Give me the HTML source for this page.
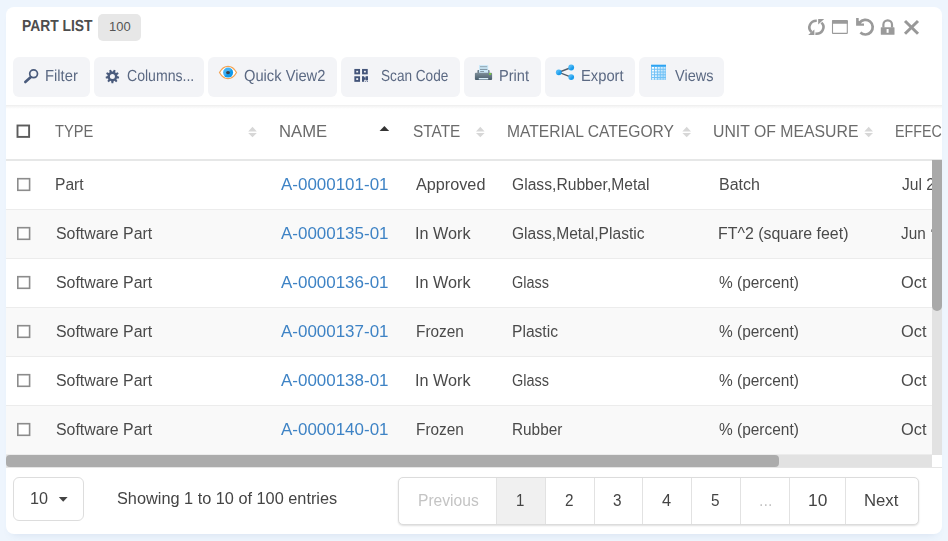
<!DOCTYPE html>
<html>
<head>
<meta charset="utf-8">
<title>Part List</title>
<style>
html,body{margin:0;padding:0;}
body{width:948px;height:541px;overflow:hidden;background:#eef5fd;font-family:"Liberation Sans",sans-serif;position:relative;}
.a{position:absolute;}
.card{left:6px;top:7px;width:936px;height:527px;background:#fff;border-radius:8px;box-shadow:0 6px 8px -6px rgba(80,110,160,0.17);overflow:hidden;}
/* inside card coordinates are page coords minus (6,7); use #pg wrapper shifted back */
#pg{position:absolute;left:-6px;top:-7px;width:948px;height:541px;}
.t{position:absolute;white-space:pre;line-height:20px;height:20px;transform-origin:0 15px;display:block;}
.badge{left:98px;top:14px;width:43px;height:27px;border-radius:5px;background:#e7e7e7;}
.btn{top:57px;height:40px;border-radius:6px;background:#f3f4f7;}
.shadowline{left:6px;top:105px;width:936px;height:4px;background:linear-gradient(to bottom,rgba(0,0,0,0.07) 0%,rgba(0,0,0,0.035) 40%,rgba(0,0,0,0) 100%);}
.hline{left:6px;top:159px;width:936px;height:2px;background:#e6e7e7;}
.row{left:6px;width:926px;height:48px;}
.row.even{background:#f9f9f9;}
.rline{left:6px;width:926px;height:1px;background:#ececec;}
.cb{left:17px;width:10px;height:10px;border:1.5px solid #8c8c8c;background:#fff;border-radius:1px;}
.cbh{left:17px;top:125px;width:9px;height:9px;border:2px solid #555;background:#fff;border-radius:1px;}
.vtrack{left:932px;top:161px;width:10px;height:294px;background:#e2e2e2;}
.vthumb{left:932px;top:160px;width:10px;height:151px;background:#a9a9a9;border-radius:0 0 5px 5px;}
.htrack{left:6px;top:455px;width:926px;height:12px;background:#e2e2e2;}
.hthumb{left:6px;top:455px;width:773px;height:12px;background:#acacac;border-radius:4px;}
.fline{left:6px;top:467px;width:936px;height:1px;background:#e6e6e6;}
.sel{left:13px;top:477px;width:69px;height:42px;border:1px solid #ddd;border-radius:6px;background:#fff;}
.pag{left:398px;top:477px;width:519px;height:46px;border:1px solid #dcdcdc;border-radius:5px;background:#fff;box-shadow:0 1px 2px rgba(0,0,0,0.13);overflow:hidden;}
.pdiv{top:478px;width:1px;height:46px;background:#e2e2e2;}
.pact{left:497px;top:478px;width:49px;height:46px;background:#f0f0f0;}
svg{position:absolute;overflow:visible;}
</style>
</head>
<body>
<div class="a card"><div id="pg">

<!-- title -->
<div class="a badge"></div>

<!-- toolbar buttons -->
<div class="a btn" style="left:13px;width:77px"></div>
<div class="a btn" style="left:94px;width:110px"></div>
<div class="a btn" style="left:208px;width:129px"></div>
<div class="a btn" style="left:341px;width:119px"></div>
<div class="a btn" style="left:464px;width:77px"></div>
<div class="a btn" style="left:545px;width:90px"></div>
<div class="a btn" style="left:639px;width:85px"></div>
<div class="a shadowline"></div>

<!-- rows -->
<div class="a row" style="top:161px"></div>
<div class="a row even" style="top:210px"></div>
<div class="a row" style="top:259px"></div>
<div class="a row even" style="top:308px"></div>
<div class="a row" style="top:357px"></div>
<div class="a row even" style="top:406px"></div>
<div class="a rline" style="top:209px"></div>
<div class="a rline" style="top:258px"></div>
<div class="a rline" style="top:307px"></div>
<div class="a rline" style="top:356px"></div>
<div class="a rline" style="top:405px"></div>
<div class="a rline" style="top:454px"></div>
<div class="a hline"></div>

<!-- checkboxes -->
<!--CBS-->

<!-- footer -->
<div class="a fline"></div>
<div class="a sel"></div>
<div class="a pag"></div>
<div class="a pact"></div>
<div class="a pdiv" style="left:496px"></div>
<div class="a pdiv" style="left:545px"></div>
<div class="a pdiv" style="left:594px"></div>
<div class="a pdiv" style="left:642px"></div>
<div class="a pdiv" style="left:691px"></div>
<div class="a pdiv" style="left:740px"></div>
<div class="a pdiv" style="left:789px"></div>
<div class="a pdiv" style="left:845px"></div>

<span class="t" style="left:21.53px;top:17px;font-size:16px;font-weight:700;color:#4d4d4d;text-rendering:geometricPrecision;transform:scaleX(0.8661)">PART LIST</span>
<span class="t" style="left:109.40px;top:17px;font-size:13px;font-weight:400;color:#555;transform:scaleX(0.9972)">100</span>
<div class="a" style="left:0;top:0;width:948px;height:541px;will-change:transform">
<span class="t" style="left:45.38px;top:67px;font-size:16px;font-weight:400;color:#5b6983;text-rendering:geometricPrecision;transform:scaleX(0.9226)">Filter</span>
<span class="t" style="left:126.80px;top:67px;font-size:16px;font-weight:400;color:#5b6983;text-rendering:geometricPrecision;transform:scaleX(0.8797)">Columns...</span>
<span class="t" style="left:244.20px;top:67px;font-size:16px;font-weight:400;color:#5b6983;text-rendering:geometricPrecision;transform:scaleX(0.9185)">Quick View2</span>
<span class="t" style="left:381.10px;top:67px;font-size:16px;font-weight:400;color:#5b6983;text-rendering:geometricPrecision;transform:scaleX(0.8503)">Scan Code</span>
<span class="t" style="left:499.29px;top:67px;font-size:16px;font-weight:400;color:#5b6983;text-rendering:geometricPrecision;transform:scaleX(0.9121)">Print</span>
<span class="t" style="left:580.58px;top:67px;font-size:16px;font-weight:400;color:#5b6983;text-rendering:geometricPrecision;transform:scaleX(0.9215)">Export</span>
<span class="t" style="left:674.60px;top:67px;font-size:16px;font-weight:400;color:#5b6983;text-rendering:geometricPrecision;transform:scaleX(0.9082)">Views</span>
<span class="t" style="left:54.80px;top:122px;font-size:16px;font-weight:400;color:#6b6b6b;transform:scaleX(0.9169)">TYPE</span>
<span class="t" style="left:279.16px;top:122px;font-size:16px;font-weight:400;color:#6b6b6b;transform:scaleX(1.0414)">NAME</span>
<span class="t" style="left:412.50px;top:122px;font-size:16px;font-weight:400;color:#6b6b6b;transform:scaleX(0.9626)">STATE</span>
<span class="t" style="left:507.32px;top:122px;font-size:16px;font-weight:400;color:#6b6b6b;transform:scaleX(0.9765)">MATERIAL CATEGORY</span>
<span class="t" style="left:712.61px;top:122px;font-size:16px;font-weight:400;color:#6b6b6b;transform:scaleX(0.9877)">UNIT OF MEASURE</span>
<span class="t" style="left:895.31px;top:122px;font-size:16px;font-weight:400;color:#6b6b6b;transform:scaleX(0.8921)">EFFECTIVE DATE</span>
<span class="t" style="left:55.12px;top:175px;font-size:16px;font-weight:400;color:#4a4a4a;transform:scaleX(0.9758)">Part</span>
<span class="t" style="left:281.40px;top:175px;font-size:16px;font-weight:400;color:#3e83c5;transform:scaleX(1.0599)">A-0000101-01</span>
<span class="t" style="left:416.00px;top:175px;font-size:16px;font-weight:400;color:#4a4a4a;transform:scaleX(1.0134)">Approved</span>
<span class="t" style="left:511.50px;top:175px;font-size:16px;font-weight:400;color:#4a4a4a;transform:scaleX(0.9789)">Glass,Rubber,Metal</span>
<span class="t" style="left:718.60px;top:175px;font-size:16px;font-weight:400;color:#4a4a4a;transform:scaleX(0.9996)">Batch</span>
<span class="t" style="left:901.50px;top:175px;font-size:16px;font-weight:400;color:#4a4a4a;transform:scaleX(0.9764)">Jul 2</span>
<span class="t" style="left:55.60px;top:224px;font-size:16px;font-weight:400;color:#4a4a4a;transform:scaleX(0.9930)">Software Part</span>
<span class="t" style="left:281.40px;top:224px;font-size:16px;font-weight:400;color:#3e83c5;transform:scaleX(1.0599)">A-0000135-01</span>
<span class="t" style="left:415.49px;top:224px;font-size:16px;font-weight:400;color:#4a4a4a;transform:scaleX(1.0123)">In Work</span>
<span class="t" style="left:511.50px;top:224px;font-size:16px;font-weight:400;color:#4a4a4a;transform:scaleX(0.9740)">Glass,Metal,Plastic</span>
<span class="t" style="left:718.01px;top:224px;font-size:16px;font-weight:400;color:#4a4a4a;transform:scaleX(0.9948)">FT^2 (square feet)</span>
<span class="t" style="left:901.30px;top:224px;font-size:16px;font-weight:400;color:#4a4a4a;transform:scaleX(0.9559)">Jun</span>
<span class="t" style="left:55.60px;top:273px;font-size:16px;font-weight:400;color:#4a4a4a;transform:scaleX(0.9930)">Software Part</span>
<span class="t" style="left:281.40px;top:273px;font-size:16px;font-weight:400;color:#3e83c5;transform:scaleX(1.0599)">A-0000136-01</span>
<span class="t" style="left:415.49px;top:273px;font-size:16px;font-weight:400;color:#4a4a4a;transform:scaleX(1.0123)">In Work</span>
<span class="t" style="left:511.50px;top:273px;font-size:16px;font-weight:400;color:#4a4a4a;transform:scaleX(0.9047)">Glass</span>
<span class="t" style="left:719.00px;top:273px;font-size:16px;font-weight:400;color:#4a4a4a;transform:scaleX(0.9652)">% (percent)</span>
<span class="t" style="left:901.40px;top:273px;font-size:16px;font-weight:400;color:#4a4a4a;transform:scaleX(1.0218)">Oct</span>
<span class="t" style="left:55.60px;top:322px;font-size:16px;font-weight:400;color:#4a4a4a;transform:scaleX(0.9930)">Software Part</span>
<span class="t" style="left:281.40px;top:322px;font-size:16px;font-weight:400;color:#3e83c5;transform:scaleX(1.0599)">A-0000137-01</span>
<span class="t" style="left:415.54px;top:322px;font-size:16px;font-weight:400;color:#4a4a4a;transform:scaleX(0.9604)">Frozen</span>
<span class="t" style="left:511.52px;top:322px;font-size:16px;font-weight:400;color:#4a4a4a;transform:scaleX(0.9756)">Plastic</span>
<span class="t" style="left:719.00px;top:322px;font-size:16px;font-weight:400;color:#4a4a4a;transform:scaleX(0.9652)">% (percent)</span>
<span class="t" style="left:901.40px;top:322px;font-size:16px;font-weight:400;color:#4a4a4a;transform:scaleX(1.0218)">Oct</span>
<span class="t" style="left:55.60px;top:371px;font-size:16px;font-weight:400;color:#4a4a4a;transform:scaleX(0.9930)">Software Part</span>
<span class="t" style="left:281.40px;top:371px;font-size:16px;font-weight:400;color:#3e83c5;transform:scaleX(1.0599)">A-0000138-01</span>
<span class="t" style="left:415.49px;top:371px;font-size:16px;font-weight:400;color:#4a4a4a;transform:scaleX(1.0123)">In Work</span>
<span class="t" style="left:511.50px;top:371px;font-size:16px;font-weight:400;color:#4a4a4a;transform:scaleX(0.9047)">Glass</span>
<span class="t" style="left:719.00px;top:371px;font-size:16px;font-weight:400;color:#4a4a4a;transform:scaleX(0.9652)">% (percent)</span>
<span class="t" style="left:901.40px;top:371px;font-size:16px;font-weight:400;color:#4a4a4a;transform:scaleX(1.0218)">Oct</span>
<span class="t" style="left:55.60px;top:420px;font-size:16px;font-weight:400;color:#4a4a4a;transform:scaleX(0.9930)">Software Part</span>
<span class="t" style="left:281.40px;top:420px;font-size:16px;font-weight:400;color:#3e83c5;transform:scaleX(1.0599)">A-0000140-01</span>
<span class="t" style="left:415.54px;top:420px;font-size:16px;font-weight:400;color:#4a4a4a;transform:scaleX(0.9604)">Frozen</span>
<span class="t" style="left:511.54px;top:420px;font-size:16px;font-weight:400;color:#4a4a4a;transform:scaleX(0.9588)">Rubber</span>
<span class="t" style="left:719.00px;top:420px;font-size:16px;font-weight:400;color:#4a4a4a;transform:scaleX(0.9652)">% (percent)</span>
<span class="t" style="left:901.40px;top:420px;font-size:16px;font-weight:400;color:#4a4a4a;transform:scaleX(1.0218)">Oct</span>
<span class="t" style="left:30.39px;top:489px;font-size:16px;font-weight:400;color:#444;transform:scaleX(1.0119)">10</span>
<span class="t" style="left:117.10px;top:489px;font-size:16px;font-weight:400;color:#444;transform:scaleX(1.0187)">Showing 1 to 10 of 100 entries</span>
<span class="t" style="left:417.63px;top:491px;font-size:16px;font-weight:400;color:#c4c4c4;transform:scaleX(0.9747)">Previous</span>
<span class="t" style="left:515.51px;top:491px;font-size:16px;font-weight:400;color:#444;transform:scaleX(0.9375)">1</span>
<span class="t" style="left:564.70px;top:491px;font-size:16px;font-weight:400;color:#444;transform:scaleX(0.9556)">2</span>
<span class="t" style="left:613.40px;top:491px;font-size:16px;font-weight:400;color:#444;transform:scaleX(0.9556)">3</span>
<span class="t" style="left:661.80px;top:491px;font-size:16px;font-weight:400;color:#444;transform:scaleX(1.0222)">4</span>
<span class="t" style="left:710.80px;top:491px;font-size:16px;font-weight:400;color:#444;transform:scaleX(0.9556)">5</span>
<span class="t" style="left:758.59px;top:491px;font-size:16px;font-weight:400;color:#c4c4c4;transform:scaleX(1.0100)">...</span>
<span class="t" style="left:808.32px;top:491px;font-size:16px;font-weight:400;color:#444;transform:scaleX(1.0829)">10</span>
<span class="t" style="left:864.06px;top:491px;font-size:16px;font-weight:400;color:#444;transform:scaleX(1.0446)">Next</span>
</div>

<!-- scrollbars (over text to clip) -->
<div class="a vtrack"></div>
<div class="a vthumb"></div>
<div class="a htrack"></div>
<div class="a hthumb"></div>

<!-- header right icons (gray) -->
<svg style="left:0;top:0" width="948" height="541" viewBox="0 0 948 541">
 <!-- refresh: two arcs with arrowheads -->
 <g fill="none" stroke="#9a9a9a" stroke-width="2.6">
  <path d="M816.8 20.8 A7.1 6.5 0 0 0 811.6 32.0"/>
  <path d="M815.4 33.6 A7.1 6.5 0 0 0 821.4 22.6"/>
 </g>
 <g fill="#9a9a9a">
  <path d="M814.4 29.4 L814.4 34.9 L808.2 34.9 Z"/>
  <path d="M818.2 19.1 L824.2 19.1 L818.2 24.6 Z"/>
 </g>
 <!-- window -->
 <rect x="832.5" y="20.7" width="14.8" height="12.7" rx="0.5" fill="none" stroke="#9a9a9a" stroke-width="1.1"/>
 <path d="M832 23.8 V21 Q832 20.1 833 20.1 H846.8 Q847.8 20.1 847.8 21 V23.8 Z" fill="#9a9a9a"/>
 <!-- undo -->
 <path d="M859.6 22.6 A7.35 7.35 0 1 1 860.4 32.6" fill="none" stroke="#9a9a9a" stroke-width="2.7"/>
 <path d="M856.1 18.1 L858.7 18.1 L858.7 20.8 L861.3 23.4 L864 23.4 L864 25.8 L856.1 25.8 Z" fill="#9a9a9a"/>
 <!-- lock -->
 <path d="M883.4 27.6 V24.6 A4.3 4.3 0 0 1 892 24.6 V27.6" fill="none" stroke="#9a9a9a" stroke-width="2.2"/>
 <rect x="880.8" y="27.2" width="13.7" height="7.6" rx="0.6" fill="#9a9a9a"/>
 <rect x="886.6" y="29" width="2" height="3.8" fill="#fff"/>
 <!-- close X -->
 <path d="M905 21 L918 33.8 M918 21 L905 33.8" stroke="#989898" stroke-width="3" fill="none"/>

 <!-- toolbar: search (flipped) -->
 <circle cx="33.6" cy="73.8" r="3.9" fill="none" stroke="#4a5b7c" stroke-width="1.7"/>
 <path d="M30.6 77.2 L25.3 82" stroke="#4a5b7c" stroke-width="2.6" stroke-linecap="round" fill="none"/>

 <!-- gear -->
 <path d="M113.62 81.15 L113.30 83.14 L111.50 83.14 L111.18 81.15 L110.28 80.82 L108.76 82.14 L107.38 80.99 L108.42 79.25 L107.94 78.42 L105.92 78.46 L105.61 76.68 L107.51 76.02 L107.68 75.08 L106.11 73.81 L107.01 72.25 L108.90 72.97 L109.63 72.36 L109.25 70.37 L110.94 69.76 L111.92 71.52 L112.88 71.52 L113.86 69.76 L115.55 70.37 L115.17 72.36 L115.90 72.97 L117.79 72.25 L118.69 73.81 L117.12 75.08 L117.29 76.02 L119.19 76.68 L118.88 78.46 L116.86 78.42 L116.38 79.25 L117.42 80.99 L116.04 82.14 L114.52 80.82 Z M114.90 76.40 A2.5 2.5 0 1 0 109.90 76.40 A2.5 2.5 0 1 0 114.90 76.40 Z" fill="#4a5b7c" fill-rule="evenodd"/>

 <!-- eye -->
 <path d="M219.5 72.5 C222 68 225 66.4 228 66.4 C231 66.4 234 68 236.5 72.5 C234 77 231 78.6 228 78.6 C225 78.6 222 77 219.5 72.5 Z" fill="#fff" stroke="#f3a455" stroke-width="1.2"/>
 <defs><linearGradient id="iris" x1="0" y1="0" x2="1" y2="1"><stop offset="0.45" stop-color="#41b2f5"/><stop offset="0.55" stop-color="#1199ea"/></linearGradient></defs>
 <circle cx="228.1" cy="72.6" r="5.0" fill="url(#iris)"/>
 <ellipse cx="228" cy="72.6" rx="2" ry="1.7" fill="#39414c"/>

 <!-- QR -->
 <g fill="none" stroke="#44557a" stroke-width="1.9">
  <rect x="355.3" y="69.9" width="3.8" height="3.5"/>
  <rect x="363" y="69.9" width="3.8" height="3.5"/>
  <rect x="355.3" y="77.2" width="3.8" height="3.7"/>
 </g>
 <g fill="#44557a">
  <rect x="362" y="76.2" width="2.2" height="5.6"/>
  <rect x="364" y="77.3" width="1.6" height="2.5"/>
  <rect x="365.6" y="76.2" width="2.4" height="4.2"/>
  <rect x="365.2" y="81" width="1" height="0.9" opacity="0.8"/>
  <rect x="367" y="81" width="1" height="0.9" opacity="0.8"/>
 </g>

 <!-- printer -->
 <defs><linearGradient id="prb" x1="0" y1="0" x2="0" y2="1"><stop offset="0" stop-color="#7d8e99"/><stop offset="1" stop-color="#485d6c"/></linearGradient></defs>
 <rect x="477.4" y="70" width="12.2" height="3.4" rx="0.8" fill="#6d7e8a"/>
 <rect x="479" y="65.1" width="9.2" height="8.2" fill="#cbe8f8"/>
 <rect x="480" y="66.2" width="7.2" height="1" fill="#8fa3b0"/>
 <rect x="480" y="68.9" width="7.4" height="1" fill="#7c909e"/>
 <rect x="480.2" y="71" width="3.8" height="0.9" fill="#7c909e"/>
 <rect x="474.9" y="72.8" width="17.2" height="7.1" rx="1" fill="url(#prb)"/>
 <rect x="478.8" y="78" width="9.4" height="1.4" fill="#d8eefa"/>
 <rect x="489" y="73" width="2.2" height="1.9" fill="#7bc646"/>

 <!-- share -->
 <path d="M571.2 67.5 L558.8 72.3 L571.2 77.1" fill="none" stroke="#4f5e6d" stroke-width="1.4"/>
 <defs><linearGradient id="nd" x1="0" y1="0" x2="1" y2="1"><stop offset="0.35" stop-color="#4ab6f5"/><stop offset="0.65" stop-color="#1a9cec"/></linearGradient></defs>
 <circle cx="558.8" cy="72.3" r="2.9" fill="url(#nd)"/>
 <circle cx="571.2" cy="67.5" r="2.9" fill="url(#nd)"/>
 <circle cx="571.2" cy="77.1" r="2.9" fill="url(#nd)"/>

 <!-- grid -->
 <rect x="651.1" y="64.8" width="14.9" height="15.1" fill="#6fc1f6"/>
 <g fill="#fff">
  <rect x="652.0" y="67.0" width="2" height="1.75" opacity="1.00"/><rect x="654.9" y="67.0" width="2" height="1.75" opacity="0.93"/><rect x="657.8" y="67.0" width="2" height="1.75" opacity="0.76"/><rect x="660.7" y="67.0" width="2" height="1.75" opacity="0.69"/><rect x="663.5" y="67.0" width="2" height="1.75" opacity="0.62"/>
  <rect x="652.0" y="69.75" width="2" height="1.75" opacity="0.94"/><rect x="654.9" y="69.75" width="2" height="1.75" opacity="0.87"/><rect x="657.8" y="69.75" width="2" height="1.75" opacity="0.70"/><rect x="660.7" y="69.75" width="2" height="1.75" opacity="0.63"/><rect x="663.5" y="69.75" width="2" height="1.75" opacity="0.56"/>
  <rect x="652.0" y="72.5" width="2" height="1.75" opacity="0.88"/><rect x="654.9" y="72.5" width="2" height="1.75" opacity="0.81"/><rect x="657.8" y="72.5" width="2" height="1.75" opacity="0.64"/><rect x="660.7" y="72.5" width="2" height="1.75" opacity="0.57"/><rect x="663.5" y="72.5" width="2" height="1.75" opacity="0.50"/>
  <rect x="652.0" y="75.25" width="2" height="1.75" opacity="0.82"/><rect x="654.9" y="75.25" width="2" height="1.75" opacity="0.75"/><rect x="657.8" y="75.25" width="2" height="1.75" opacity="0.58"/><rect x="660.7" y="75.25" width="2" height="1.75" opacity="0.51"/><rect x="663.5" y="75.25" width="2" height="1.75" opacity="0.45"/>
  <rect x="652.0" y="78.0" width="2" height="1.75" opacity="0.76"/><rect x="654.9" y="78.0" width="2" height="1.75" opacity="0.69"/><rect x="657.8" y="78.0" width="2" height="1.75" opacity="0.52"/><rect x="660.7" y="78.0" width="2" height="1.75" opacity="0.45"/><rect x="663.5" y="78.0" width="2" height="1.75" opacity="0.45"/>
  </g>
 <rect x="651.1" y="64.8" width="14.9" height="1.7" fill="#2ea3f2"/>

 <!-- checkboxes -->
 <rect x="17.5" y="125.5" width="11.6" height="11.4" fill="#fff" stroke="#5c5c5c" stroke-width="1.9"/>
 <rect x="17.8" y="178.7" width="11.8" height="11.6" fill="#fff" stroke="#8c8c8c" stroke-width="1.6"/>
 <rect x="17.8" y="227.7" width="11.8" height="11.6" fill="#fff" stroke="#8c8c8c" stroke-width="1.6"/>
 <rect x="17.8" y="276.7" width="11.8" height="11.6" fill="#fff" stroke="#8c8c8c" stroke-width="1.6"/>
 <rect x="17.8" y="325.7" width="11.8" height="11.6" fill="#fff" stroke="#8c8c8c" stroke-width="1.6"/>
 <rect x="17.8" y="374.7" width="11.8" height="11.6" fill="#fff" stroke="#8c8c8c" stroke-width="1.6"/>
 <rect x="17.8" y="423.7" width="11.8" height="11.6" fill="#fff" stroke="#8c8c8c" stroke-width="1.6"/>
 <rect x="931" y="229.4" width="1" height="2.6" fill="#4a4a4a" opacity="0.6"/>
 <!-- sort icons -->
 <g fill="#d7d7d7">
  <path d="M248.2 131.5 L256.8 131.5 L252.5 126.8 Z M248.2 133 L256.8 133 L252.5 137.3 Z"/>
  <path d="M476 131.5 L484.6 131.5 L480.3 126.8 Z M476 133 L484.6 133 L480.3 137.3 Z"/>
  <path d="M682.4 131.5 L691 131.5 L686.7 126.8 Z M682.4 133 L691 133 L686.7 137.3 Z"/>
  <path d="M864.4 131.5 L873 131.5 L868.7 126.8 Z M864.4 133 L873 133 L868.7 137.3 Z"/>
 </g>
 <path d="M379.6 130.9 L389.2 130.9 L384.4 126 Z" fill="#333"/>
 <!-- select caret -->
 <path d="M58.8 497 L67.6 497 L63.2 501.7 Z" fill="#444"/>
</svg>


</div></div>
</body>
</html>
